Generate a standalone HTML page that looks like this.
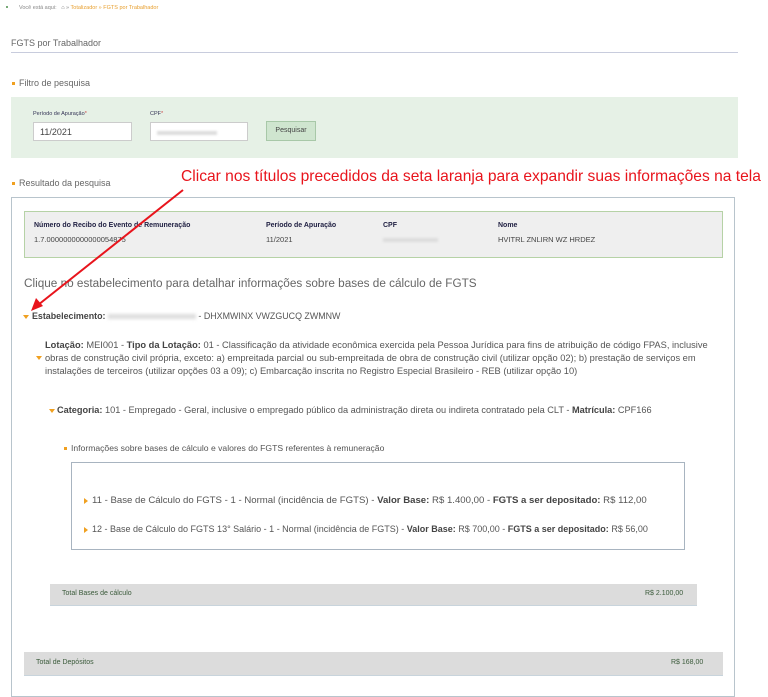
<!DOCTYPE html>
<html><head><meta charset="utf-8"><style>
body{margin:0;width:768px;height:689px;overflow:hidden;background:#fff;font-family:"Liberation Sans",Arial,sans-serif;color:#555;position:relative}
.a{position:absolute;white-space:nowrap}
.t{font-size:9.3px;color:#555}
b{color:#444}
.bul{position:absolute;width:3px;height:3px;background:#f0a020}
.tri{position:absolute;width:0;height:0;border-left:3px solid transparent;border-right:3px solid transparent;border-top:4px solid #f0a020}
.trr{position:absolute;width:0;height:0;border-top:3px solid transparent;border-bottom:3px solid transparent;border-left:4px solid #f0a020}
.inp{position:absolute;background:#fff;border:1px solid #ccc;height:19px;font-size:9px;line-height:19px;box-sizing:border-box;padding-left:6px;color:#444}
</style></head><body>
<div class="a" style="left:6px;top:6px;width:2px;height:2px;background:#7a7"></div>
<div class="a" style="left:19px;top:5px;font-size:5.5px;color:#888">Você está aqui: &nbsp;&nbsp;<span style="color:#777">⌂</span> » <span style="color:#e8a030">Totalizador » FGTS por Trabalhador</span></div>
<div class="a" style="left:11px;top:38px;font-size:9px;color:#666">FGTS por Trabalhador</div>
<div class="a" style="left:11px;top:52px;width:727px;height:1px;background:#c8ccdd"></div>
<div class="bul" style="left:12px;top:82px"></div>
<div class="a" style="left:19px;top:78px;font-size:9px;color:#666">Filtro de pesquisa</div>
<div class="a" style="left:11px;top:97px;width:727px;height:61px;background:#e6f1e6"></div>
<div class="a" style="left:33px;top:111px;font-size:5.5px;color:#335">Período de Apuração<span style="color:#c44">*</span></div>
<div class="inp" style="left:33px;top:122px;width:99px">11/2021</div>
<div class="a" style="left:150px;top:111px;font-size:5.5px;color:#335">CPF<span style="color:#c44">*</span></div>
<div class="inp" style="left:150px;top:122px;width:98px"><span style="display:inline-block;width:60px;height:4px;background:#ddd;filter:blur(1px)"></span></div>
<div class="a" style="left:266px;top:121px;width:50px;height:20px;background:#cfe5cf;border:1px solid #a8c8a8;box-sizing:border-box;font-size:7px;color:#444;text-align:center;line-height:18px">Pesquisar</div>
<div class="bul" style="left:12px;top:182px"></div>
<div class="a" style="left:19px;top:178px;font-size:9px;color:#666">Resultado da pesquisa</div>
<div class="a" style="left:181px;top:168px;font-size:15.6px;color:#e8141c">Clicar nos títulos precedidos da seta laranja para expandir suas informações na tela</div>
<div class="a" style="left:11px;top:197px;width:724px;height:500px;border:1px solid #b8c4cc;box-sizing:border-box"></div>
<div class="a" style="left:24px;top:211px;width:699px;height:47px;background:#efefef;border:1px solid #b6d2a6;box-sizing:border-box"></div>
<div class="a" style="left:34px;top:222px;font-size:7px;color:#224;font-weight:bold">Número do Recibo do Evento de Remuneração</div>
<div class="a" style="left:34px;top:235px;font-size:7.5px;color:#444">1.7.0000000000000054875</div>
<div class="a" style="left:266px;top:222px;font-size:7px;color:#224;font-weight:bold">Período de Apuração</div>
<div class="a" style="left:266px;top:235px;font-size:7.5px;color:#444">11/2021</div>
<div class="a" style="left:383px;top:222px;font-size:7px;color:#224;font-weight:bold">CPF</div>
<div class="a" style="left:383px;top:238px;width:55px;height:4px;background:#ddd;filter:blur(1px)"></div>
<div class="a" style="left:498px;top:222px;font-size:7px;color:#224;font-weight:bold">Nome</div>
<div class="a" style="left:498px;top:235px;font-size:7.5px;color:#444">HVITRL ZNLIRN WZ HRDEZ</div>
<div class="a" style="left:24px;top:277px;font-size:11.75px;color:#666">Clique no estabelecimento para detalhar informações sobre bases de cálculo de FGTS</div>
<div class="tri" style="left:23px;top:315px"></div>
<div class="a t" style="left:32px;top:311px;font-size:8.9px"><b>Estabelecimento:</b> <span style="display:inline-block;width:88px;height:5px;background:#ddd;filter:blur(1.5px)"></span> - DHXMWINX VWZGUCQ ZWMNW</div>
<div class="a t" style="left:45px;top:340px;font-size:9.3px"><b>Lotação:</b> MEI001 - <b>Tipo da Lotação:</b> 01 - Classificação da atividade econômica exercida pela Pessoa Jurídica para fins de atribuição de código FPAS, inclusive</div>
<div class="tri" style="left:36px;top:356px"></div>
<div class="a t" style="left:45px;top:353px;font-size:9.3px">obras de construção civil própria, exceto: a) empreitada parcial ou sub-empreitada de obra de construção civil (utilizar opção 02); b) prestação de serviços em</div>
<div class="a t" style="left:45px;top:366px;font-size:9.3px">instalações de terceiros (utilizar opções 03 a 09); c) Embarcação inscrita no Registro Especial Brasileiro - REB (utilizar opção 10)</div>
<div class="tri" style="left:49px;top:409px"></div>
<div class="a t" style="left:57px;top:405px;font-size:9.2px"><b>Categoria:</b> 101 - Empregado - Geral, inclusive o empregado público da administração direta ou indireta contratado pela CLT - <b>Matrícula:</b> CPF166</div>
<div class="bul" style="left:64px;top:447px"></div>
<div class="a t" style="left:71px;top:443px;font-size:8.6px">Informações sobre bases de cálculo e valores do FGTS referentes à remuneração</div>
<div class="a" style="left:71px;top:462px;width:614px;height:88px;border:1px solid #a8b4c0;box-sizing:border-box"></div>
<div class="trr" style="left:84px;top:498px"></div>
<div class="a t" style="left:92px;top:495px;font-size:9.6px">11 - Base de Cálculo do FGTS - 1 - Normal (incidência de FGTS) - <b>Valor Base:</b> R$ 1.400,00 - <b>FGTS a ser depositado:</b> R$ 112,00</div>
<div class="trr" style="left:84px;top:527px"></div>
<div class="a t" style="left:92px;top:524px;font-size:9px">12 - Base de Cálculo do FGTS 13° Salário - 1 - Normal (incidência de FGTS) - <b>Valor Base:</b> R$ 700,00 - <b>FGTS a ser depositado:</b> R$ 56,00</div>
<div class="a" style="left:50px;top:584px;width:647px;height:22px;background:#dcdcdc;border-bottom:1px solid #c8d4dc;box-sizing:border-box"></div>
<div class="a" style="left:62px;top:590px;font-size:7px;color:#3a5a3a">Total Bases de cálculo</div>
<div class="a" style="left:645px;top:590px;font-size:7px;color:#3a5a3a">R$ 2.100,00</div>
<div class="a" style="left:24px;top:652px;width:699px;height:24px;background:#dcdcdc;border-bottom:1px solid #c8d4dc;box-sizing:border-box"></div>
<div class="a" style="left:36px;top:659px;font-size:7px;color:#3a5a3a">Total de Depósitos</div>
<div class="a" style="left:671px;top:659px;font-size:7px;color:#3a5a3a">R$ 168,00</div>
<svg class="a" style="left:0;top:0" width="768" height="689"><line x1="183" y1="190" x2="38" y2="305" stroke="#e8141c" stroke-width="2"/><polygon points="31,311 36,298 43,306" fill="#e8141c"/></svg>
</body></html>
